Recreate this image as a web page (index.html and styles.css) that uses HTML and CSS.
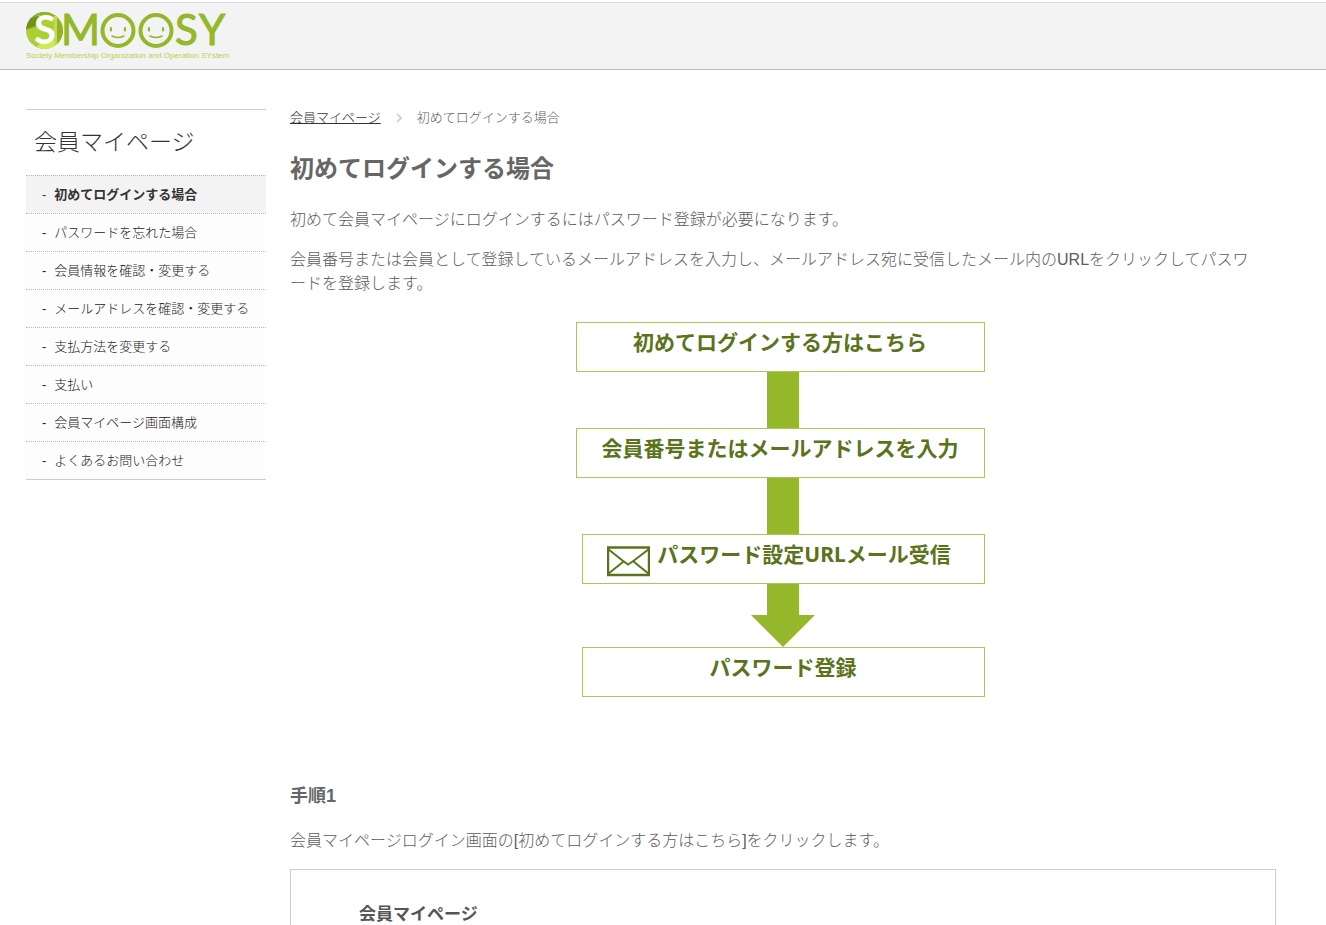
FILE: index.html
```html
<!DOCTYPE html>
<html lang="ja">
<head>
<meta charset="utf-8">
<title>初めてログインする場合</title>
<link rel="stylesheet" href="styles.css">
</head>
<body>
<header class="site-header">
  <a class="logo" href="#" aria-label="SMOOSY">
    <svg class="logo-mark" viewBox="0 0 202 50" width="202" height="50">
      <defs><clipPath id="ball"><circle cx="18.500" cy="19.500" r="18.500"/></clipPath></defs>
      <g clip-path="url(#ball)">
        <rect width="37" height="38" fill="#acd033"/>
        <path d="M0 0H37V38H31V8L12 4L10 16L0 19Z" fill="#90b428"/>
        <path d="M2 8L13 5L9 15L0 18Z" fill="#76900f"/>
        <path d="M9 38L15 31L31 29V38Z" fill="#cdea55"/>
        <path d="M28 5H31V34H28Z" fill="#bfdd58"/>
      </g>
      <text class="logo-s" x="8" y="33">S</text>
      <g class="logo-word">
        <text x="35" y="34">M</text>
        <text x="149" y="34">S</text>
        <text x="173" y="34">Y</text>
      </g>
      <g fill="none" stroke="#94b82a" stroke-width="4">
        <circle cx="92" cy="19.500" r="15.500"/>
        <circle cx="130" cy="19.500" r="15.500"/>
      </g>
      <g fill="none" stroke="#94b82a" stroke-width="1.600" stroke-linecap="round">
        <path d="M86 25Q92 28 98 25M124 25Q130 28 136 25"/>
        <path d="M85 17V19.500M99 17V19.500M123 17V19.500M137 17V19.500" stroke-width="2.200"/>
      </g>
      <text class="logo-tag" x="0" y="47">Society Membership Organization and Operation SYstem</text>
    </svg>
  </a>
</header>
<div class="page">
  <nav class="side" aria-label="会員マイページ">
    <h2 class="side-title">会員マイページ</h2>
    <ul class="side-list">
      <li><a class="current" href="#">初めてログインする場合</a></li>
      <li><a href="#">パスワードを忘れた場合</a></li>
      <li><a href="#">会員情報を確認・変更する</a></li>
      <li><a href="#">メールアドレスを確認・変更する</a></li>
      <li><a href="#">支払方法を変更する</a></li>
      <li><a href="#">支払い</a></li>
      <li><a href="#">会員マイページ画面構成</a></li>
      <li><a href="#">よくあるお問い合わせ</a></li>
    </ul>
  </nav>
  <main class="main">
    <div class="crumbs">
      <a href="#">会員マイページ</a>
      <svg width="6" height="10" viewBox="0 0 6 10"><path d="M1 1L5 5L1 9" fill="none" stroke="#ccc" stroke-width="1.600"/></svg>
      <span>初めてログインする場合</span>
    </div>
    <h1>初めてログインする場合</h1>
    <p>初めて会員マイページにログインするにはパスワード登録が必要になります。</p>
    <p>会員番号または会員として登録しているメールアドレスを入力し、メールアドレス宛に受信したメール内のURLをクリックしてパスワードを登録します。</p>
    <div class="flow">
      <div class="step wide">初めてログインする方はこちら</div>
      <div class="bar"></div>
      <div class="step wide">会員番号またはメールアドレスを入力</div>
      <div class="bar"></div>
      <div class="step mail">
        <svg class="envelope" width="43" height="31" viewBox="0 0 43 31"><g fill="none" stroke="#5b731b" stroke-width="2"><path d="M1 1.500H42V29H1Z" stroke-width="2.400"/><path d="M1 3L15.500 14.500L21 18.500L27 14.500L42 3M1 28L16.500 15.500M42 28L26.500 15.500"/></g></svg>
        <span>パスワード設定URLメール受信</span>
      </div>
      <svg class="arrow" width="64" height="63" viewBox="0 0 64 63"><path d="M16 0H48V31H64L32 63L0 31H16Z" fill="#94b82a"/></svg>
      <div class="step">パスワード登録</div>
    </div>
    <h2 class="proc">手順1</h2>
    <p>会員マイページログイン画面の[初めてログインする方はこちら]をクリックします。</p>
    <section class="shot">
      <h3>会員マイページ</h3>
    </section>
  </main>
</div>
</body>
</html>
```
FILE: styles.css
```css
* { box-sizing: border-box; }
html { overflow: hidden; height: 100%; }
body {
  margin: 0;
  height: 100%;
  overflow: hidden;
  background: #fff;
  color: #5c5c5c;
  font: 300 16px/24px "Liberation Sans", "Noto Sans CJK JP", sans-serif;
  line-break: loose;
}
h1, h2, h3, p, ul { margin: 0; padding: 0; }
a { color: #333; }

.site-header {
  margin-top: 2px;
  padding: 8px 26px;
  background: #f3f3f3;
  border-top: 1px solid #ddd;
  border-bottom: 1px solid #bbb;
}
.logo, .logo-mark { display: block; overflow: visible; }
.logo { width: 202px; }
.logo-s { font: bold 40px Lato, sans-serif; fill: #fff; }
.logo-word { font: 42px Lato, sans-serif; fill: #94b82a; stroke: #94b82a; stroke-width: 1px; }
.logo-tag { font: 8px "Liberation Sans", sans-serif; fill: #b4d44c; }

.page {
  display: flex;
  align-items: flex-start;
  gap: 24px;
  padding: 39px 50px 0 26px;
}
.side {
  flex: 0 0 240px;
  border-top: 1px solid #ccc;
  border-bottom: 1px solid #ccc;
}
.side-title {
  padding: 16px 8px;
  color: #333;
  font-size: 23px;
  font-weight: 300;
  line-height: 33px;
}
.side-list { list-style: none; }
.side-list a {
  display: flex;
  gap: 8px;
  padding: 7px 16px;
  border-top: 1px dotted #bbb;
  background: #fdfdfd;
  color: #222;
  font-size: 13px;
  line-height: 23px;
  height: 38px;
  text-decoration: none;
  white-space: nowrap;
}
.side-list a::before { content: "-"; font-weight: normal; }
.side-list .current { background: #f3f3f3; color: #333; font-weight: bold; }

.main { flex: 1; min-width: 0; }
.crumbs {
  display: flex;
  align-items: center;
  gap: 15px;
  font-size: 13px;
  line-height: 18px;
}
h1, .proc { color: #666; }
h1 { margin: 24px 0 21px; font-size: 24px; line-height: 36px; }
.main p { margin-bottom: 16px; padding-right: 16px; }

.flow {
  display: flex;
  flex-direction: column;
  align-items: center;
  width: 403px;
  margin: 26px auto 87px;
  color: #5b731b;
  font: bold 21px/30px "Noto Sans", "Noto Sans CJK JP", sans-serif;
  white-space: nowrap;
}
.step {
  display: flex;
  justify-content: center;
  width: 100%;
  height: 50px;
  padding: 4px 0 14px;
  border: 1px solid #a9c855;
}
.wide { width: 409px; margin-left: -6px; }
.mail { gap: 7px; padding-right: 8px; }
.envelope { margin-top: 7px; }
.bar { width: 32px; height: 56px; background: #94b82a; }
.arrow { display: block; }

.proc { margin-bottom: 21px; font-size: 18px; line-height: 24px; }
.shot { padding: 33px 68px; border: 1px solid #ccc; }
.shot h3 { color: #555; font-size: 17px; line-height: 24px; }
```
